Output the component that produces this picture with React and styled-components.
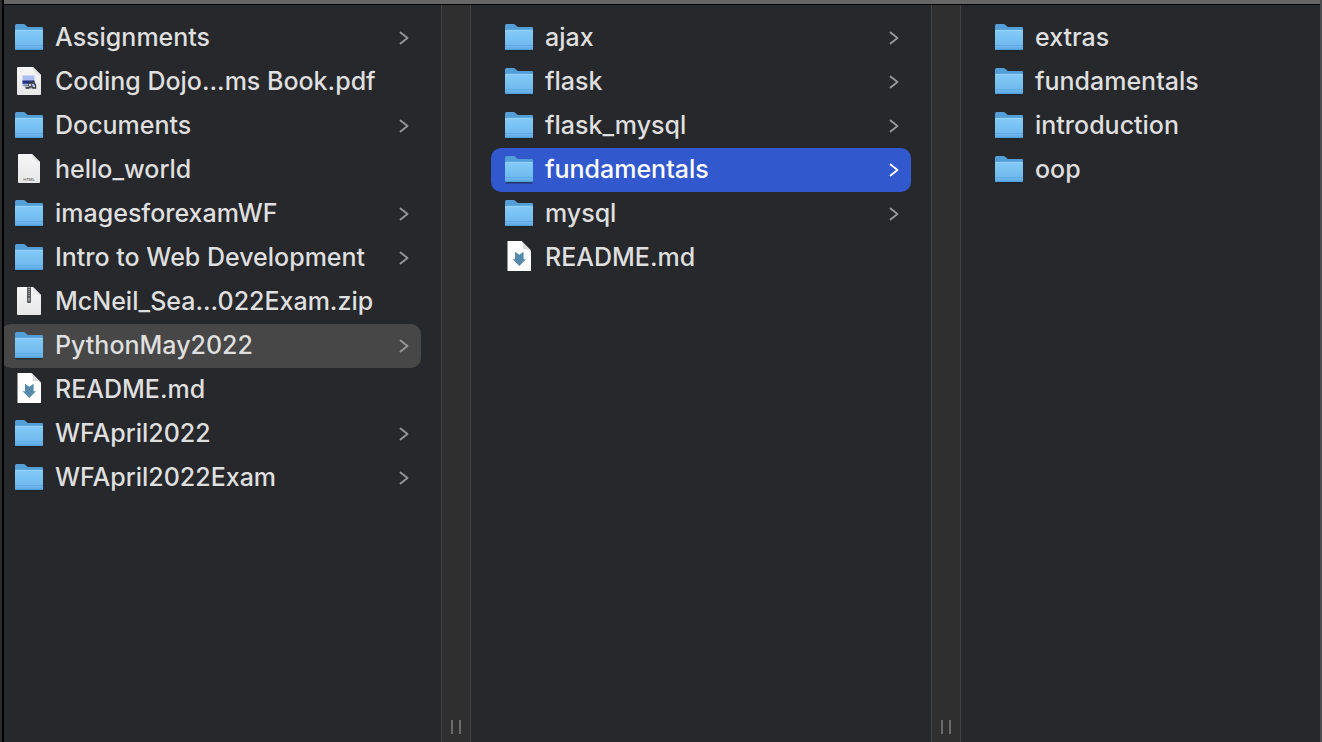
import React, { useState } from "react";
import styled, { createGlobalStyle, css } from "styled-components";

const GlobalStyle = createGlobalStyle`
  * { box-sizing: border-box; }
  body { margin: 0; background: #27282c; }
`;

const Window = styled.main`
  min-height: 100vh;
  display: flex;
  overflow: hidden;
  background: #27282c;
  border-right: 2px solid #4c4d50;
  font-family: Inter, "Liberation Sans", sans-serif;
`;

const LeftEdge = styled.div`
  flex: none;
  width: 4px;
  background: #000;
  border-left: 2px solid #2b2b2d;
`;

const Browser = styled.div`
  flex: 1;
  min-width: 0;
  display: flex;
  flex-direction: column;
  overflow: hidden;
`;

const Toolbar = styled.div`
  height: 5px;
  flex: none;
  background: #666667;
  border-bottom: 1px solid #000;
`;

const Columns = styled.div`
  flex: 1;
  display: flex;
  margin-left: -23px;
`;

const Column = styled.ul`
  flex: ${(p) => p.$share} 1 0;
  min-width: 0;
  margin: 0;
  padding: 11px 20px;
  list-style: none;
`;

const Divider = styled.div`
  flex: none;
  width: 30px;
  display: flex;
  justify-content: center;
  align-items: flex-end;
  padding-bottom: 8px;
  background: #302f2f;
  border: solid #434344;
  border-width: 0 1px;
`;

const Grip = styled.span`
  width: 10px;
  height: 14px;
  border: solid #6a6a6a;
  border-width: 0 2px;
`;

const Row = styled.button`
  display: flex;
  align-items: center;
  gap: 12px;
  width: 100%;
  height: 44px;
  padding: 0 12px 0 14px;
  border: 0;
  border-radius: 10px;
  background: transparent;
  color: #dfdfdf;
  font: inherit;
  font-size: 25px;
  font-weight: 500;
  line-height: 32px;
  text-align: left;
  ${(p) => p.$state === "path" && css`background: #474747;`}
  ${(p) => p.$state === "active" && css`background: #3158cd; color: #fff;`}
`;

const Name = styled.span`
  flex: 1;
  min-width: 0;
  padding-bottom: 2px;
  white-space: nowrap;
`;

const Icon = styled.svg`
  flex: none;
  width: 28px;
  height: 34px;
  overflow: visible;
`;

const Chevron = styled.svg`
  flex: none;
  width: 10px;
  height: 14px;
  fill: none;
  stroke: ${(p) => (p.$active ? "#fff" : "#98989a")};
  stroke-width: 1.8;
  stroke-linecap: round;
  stroke-linejoin: round;
`;

function Gradients() {
  return (
    <svg width="0" height="0" style={{ position: "absolute" }} aria-hidden="true">
      <defs>
        <linearGradient id="folderFront" x1="0" y1="0" x2="0" y2="1">
          <stop offset="0" stopColor="#83cbf9" />
          <stop offset="1" stopColor="#69b4ec" />
        </linearGradient>
        <linearGradient id="paper" x1="0" y1="0" x2="0" y2="1">
          <stop offset="0" stopColor="#f6f6f6" />
          <stop offset="1" stopColor="#e7e7e7" />
        </linearGradient>
        <linearGradient id="fold" x1="0" y1="1" x2="1" y2="0">
          <stop offset="0" stopColor="#fff" />
          <stop offset="0.5" stopColor="#dedede" />
          <stop offset="1" stopColor="#c4c4c4" />
        </linearGradient>
      </defs>
    </svg>
  );
}

function FolderIcon() {
  return (
    <Icon viewBox="0 0 28 34" aria-hidden="true">
      <rect x="0.5" y="28" width="27" height="2.6" rx="1" fill="#17191c" opacity="0.6" />
      <path d="M0 5Q0 3 1.5 3H8.5Q9.5 3 10.3 3.8L11.8 5.2Q12.5 6 13.5 6H27Q28 6 28 7V12H0Z" fill="#559fd9" />
      <path d="M0 10Q0 9 1 9H27Q28 9 28 10V28Q28 29 27 29H1Q0 29 0 28Z" fill="url(#folderFront)" />
      <path d="M0.5 9.4H27.5" stroke="#9ad7fb" strokeWidth="0.8" />
      <path d="M0 24.5H28M0 27H28" stroke="#5aa5de" strokeWidth="0.8" />
      <path d="M0.4 28.6H27.6" stroke="#4e97cf" strokeWidth="0.9" />
    </Icon>
  );
}

function PdfIcon() {
  return (
    <Icon viewBox="0 0 28 34" aria-hidden="true">
      <path d="M2 3Q2 2 3 2H18L26 10V29Q26 30 25 30H3Q2 30 2 29Z" fill="url(#paper)" />
      <path d="M18 2L26 10H19Q18 10 18 9Z" fill="url(#fold)" />
      <rect x="7.5" y="10.5" width="12" height="10.5" fill="#a9bdf0" />
      <rect x="7.5" y="15.5" width="12" height="3.2" fill="#23317f" />
      <path d="M8.5 20.5H15M10 22.6H19" stroke="#7d8794" strokeWidth="1.6" />
      <path d="M13 19L18 16.5L20.5 20V23H18L16.5 20.5L13.5 23H11" fill="none" stroke="#383b41" strokeWidth="1.4" />
      <circle cx="15" cy="20" r="1.6" fill="#d8dce4" stroke="#444" strokeWidth="0.8" />
    </Icon>
  );
}

function HtmlIcon() {
  return (
    <Icon viewBox="0 0 28 34" aria-hidden="true">
      <path d="M3 2Q3 1 4 1H17L25 9V29Q25 30 24 30H4Q3 30 3 29Z" fill="url(#paper)" />
      <path d="M17 1L25 9H18Q17 9 17 8Z" fill="url(#fold)" />
      <text x="14" y="28" textAnchor="middle" fontSize="4" fontWeight="600" fill="#777">HTML</text>
    </Icon>
  );
}

function ZipIcon() {
  return (
    <Icon viewBox="0 0 28 34" aria-hidden="true">
      <path d="M2 3Q2 2 3 2H18L26 10V29Q26 30 25 30H3Q2 30 2 29Z" fill="url(#paper)" />
      <path d="M18 2L26 10H19Q18 10 18 9Z" fill="url(#fold)" />
      <rect x="12" y="2" width="4" height="16" rx="1.2" fill="#555759" />
      <path d="M14 2V11" stroke="#b0b0b0" strokeWidth="1.6" strokeDasharray="1 1" />
      <rect x="13.2" y="12.4" width="1.6" height="3.8" rx="0.8" fill="#a9abad" />
    </Icon>
  );
}

function MarkdownIcon() {
  return (
    <Icon viewBox="0 0 28 34" aria-hidden="true">
      <path d="M2.5 0H16.5L26 9.5V30H2.5Z" fill="#fff" />
      <path d="M16.5 0Q18.5 3 18 8Q23 7.5 26 9.5Z" fill="#d9d9d9" />
      <path d="M10 10.8L14.3 13.8L18.6 10.8V18.3H21L14.3 25L7.6 18.3H10Z" fill="#568aab" />
    </Icon>
  );
}

const icons = {
  folder: FolderIcon,
  pdf: PdfIcon,
  html: HtmlIcon,
  zip: ZipIcon,
  markdown: MarkdownIcon,
};

const folder = (name, hasArrow = true) => ({ name, kind: "folder", hasArrow });
const file = (name, kind) => ({ name, kind });

const home = [
  folder("Assignments"),
  file("Coding Dojo...ms Book.pdf", "pdf"),
  folder("Documents"),
  file("hello_world", "html"),
  folder("imagesforexamWF"),
  folder("Intro to Web Development"),
  file("McNeil_Sea...022Exam.zip", "zip"),
  folder("PythonMay2022"),
  file("README.md", "markdown"),
  folder("WFApril2022"),
  folder("WFApril2022Exam"),
];

const python = [
  folder("ajax"),
  folder("flask"),
  folder("flask_mysql"),
  folder("fundamentals"),
  folder("mysql"),
  file("README.md", "markdown"),
];

const fundamentals = [
  folder("extras", false),
  folder("fundamentals", false),
  folder("introduction", false),
  folder("oop", false),
];

function FileColumn({ label, items, selected, state, share, onSelect }) {
  return (
    <Column $share={share} aria-label={label}>
      {items.map((item) => {
        const Glyph = icons[item.kind];
        const rowState = item.name === selected ? state : undefined;
        return (
          <li key={item.name}>
            <Row type="button" $state={rowState} onClick={() => onSelect(item.name)}>
              <Glyph />
              <Name>{item.name}</Name>
              {item.hasArrow && (
                <Chevron viewBox="0 0 10 14" $active={rowState === "active"} aria-hidden="true">
                  <path d="M1.5 1.5L8.5 7L1.5 12.5" />
                </Chevron>
              )}
            </Row>
          </li>
        );
      })}
    </Column>
  );
}

export default function App() {
  const [path, setPath] = useState(["PythonMay2022", "fundamentals", null]);
  const select = (level) => (name) =>
    setPath((old) => old.map((entry, i) => (i === level ? name : entry)));

  return (
    <>
      <GlobalStyle />
      <Gradients />
      <Window>
        <LeftEdge />
        <Browser>
          <Toolbar />
          <Columns>
            <FileColumn label="Home" items={home} selected={path[0]} state="path" share={420} onSelect={select(0)} />
            <Divider><Grip /></Divider>
            <FileColumn label="PythonMay2022" items={python} selected={path[1]} state="active" share={420} onSelect={select(1)} />
            <Divider><Grip /></Divider>
            <FileColumn label="fundamentals" items={fundamentals} selected={path[2]} state="active" share={319} onSelect={select(2)} />
          </Columns>
        </Browser>
      </Window>
    </>
  );
}
